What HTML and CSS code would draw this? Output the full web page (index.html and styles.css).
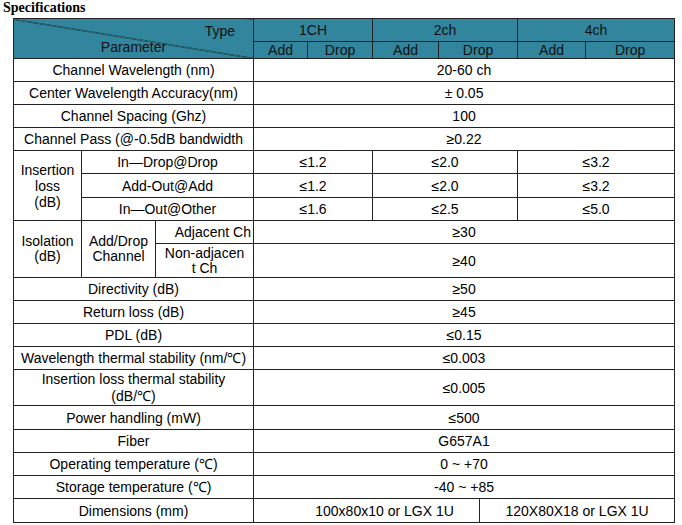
FILE: index.html
```html
<!DOCTYPE html>
<html>
<head>
<meta charset="utf-8">
<link rel="stylesheet" href="styles.css">
</head>
<body>
<div class="title">Specifications</div>
<table class="spec">
  <colgroup>
    <col class="c1"><col class="c2"><col class="c3">
    <col class="c4"><col class="c5">
    <col class="c6"><col class="c7a"><col class="c7b">
    <col class="c8"><col class="c9">
  </colgroup>
  <thead>
    <tr class="h1">
      <th colspan="3" rowspan="2" class="diag">
        <div class="type">Type</div>
        <div class="param">Parameter</div>
      </th>
      <th colspan="2">1CH</th>
      <th colspan="3">2ch</th>
      <th colspan="2">4ch</th>
    </tr>
    <tr class="h2">
      <th>Add</th><th>Drop</th>
      <th>Add</th><th colspan="2">Drop</th>
      <th>Add</th><th>Drop</th>
    </tr>
  </thead>
  <tbody>
    <tr><td colspan="3">Channel Wavelength (nm)</td><td colspan="7">20-60 ch</td></tr>
    <tr><td colspan="3">Center Wavelength Accuracy(nm)</td><td colspan="7">± 0.05</td></tr>
    <tr><td colspan="3">Channel Spacing (Ghz)</td><td colspan="7">100</td></tr>
    <tr><td colspan="3">Channel Pass (@-0.5dB bandwidth</td><td colspan="7">≥0.22</td></tr>
    <tr>
      <td rowspan="3">Insertion<br>loss<br>(dB)</td>
      <td colspan="2">In—Drop@Drop</td>
      <td colspan="2">≤1.2</td><td colspan="3">≤2.0</td><td colspan="2">≤3.2</td>
    </tr>
    <tr class="r24">
      <td colspan="2">Add-Out@Add</td>
      <td colspan="2">≤1.2</td><td colspan="3">≤2.0</td><td colspan="2">≤3.2</td>
    </tr>
    <tr>
      <td colspan="2">In—Out@Other</td>
      <td colspan="2">≤1.6</td><td colspan="3">≤2.5</td><td colspan="2">≤5.0</td>
    </tr>
    <tr>
      <td rowspan="2" class="tight">Isolation<br>(dB)</td>
      <td rowspan="2" class="tight">Add/Drop<br>Channel</td>
      <td class="right">Adjacent Ch</td>
      <td colspan="7">≥30</td>
    </tr>
    <tr class="r34">
      <td class="tight">Non-adjacen<br>t Ch</td>
      <td colspan="7">≥40</td>
    </tr>
    <tr><td colspan="3">Directivity (dB)</td><td colspan="7">≥50</td></tr>
    <tr><td colspan="3">Return loss (dB)</td><td colspan="7">≥45</td></tr>
    <tr><td colspan="3">PDL (dB)</td><td colspan="7">≤0.15</td></tr>
    <tr><td colspan="3">Wavelength thermal stability (nm/℃)</td><td colspan="7">≤0.003</td></tr>
    <tr class="r36"><td colspan="3" class="loose">Insertion loss thermal stability<br>(dB/℃)</td><td colspan="7">≤0.005</td></tr>
    <tr class="r24"><td colspan="3">Power handling (mW)</td><td colspan="7">≤500</td></tr>
    <tr><td colspan="3">Fiber</td><td colspan="7">G657A1</td></tr>
    <tr><td colspan="3">Operating temperature (℃)</td><td colspan="7">0 ~ +70</td></tr>
    <tr><td colspan="3">Storage temperature (℃)</td><td colspan="7">-40 ~ +85</td></tr>
    <tr class="r24"><td colspan="3">Dimensions (mm)</td><td colspan="4" class="dim1">100x80x10 or LGX 1U</td><td colspan="3">120X80X18 or LGX 1U</td></tr>
  </tbody>
</table>
</body>
</html>
```

FILE: styles.css
```css
html, body {
  margin: 0;
  padding: 0;
  background: #ffffff;
}

.title {
  font-family: "Liberation Serif", "Times New Roman", serif;
  font-weight: bold;
  font-size: 14px;
  line-height: 16px;
  height: 18px;
  padding-left: 3px;
  color: #000;
}

.spec {
  margin-left: 13px;
  border-collapse: collapse;
  table-layout: fixed;
  width: 662px;
  font-family: "Liberation Sans", Arial, sans-serif;
  font-size: 14px;
  line-height: 16px;
  color: #000;
  border: 1px solid #333;
}

.c1 { width: 68px; }
.c2 { width: 74px; }
.c3 { width: 98px; }
.c4 { width: 54px; }
.c5 { width: 65px; }
.c6 { width: 66px; }
.c7a { width: 41px; }
.c7b { width: 38px; }
.c8 { width: 68px; }
.c9 { width: 89px; }

.spec th,
.spec td {
  border: 1px solid #222;
  padding: 0;
  text-align: center;
  vertical-align: middle;
  font-weight: normal;
  white-space: nowrap;
  overflow: hidden;
}

.spec thead th {
  background: #31859c;
  color: #111;
}

.spec tbody tr { height: 23px; }
.spec tr.h1 { height: 23px; }
.spec tr.h2 { height: 17px; }
.spec tbody tr.r24 { height: 24px; }
.spec tbody tr.r34 { height: 34px; }
.spec tbody tr.r36 { height: 36px; }

.spec th.diag {
  vertical-align: top;
  padding-top: 4px;
  background: linear-gradient(to top right, #31859c calc(50% - 0.7px), #1a1a1a 50%, #31859c calc(50% + 0.7px));
}

.diag .type {
  text-align: right;
  padding-right: 18px;
}

.diag .param {
  text-align: center;
}

.spec td.right {
  text-align: right;
  padding-right: 2px;
}

.spec td.dim1 { padding-left: 36px; }

.spec td.tight { line-height: 15px; }
.spec td.loose { line-height: 17px; }
```
